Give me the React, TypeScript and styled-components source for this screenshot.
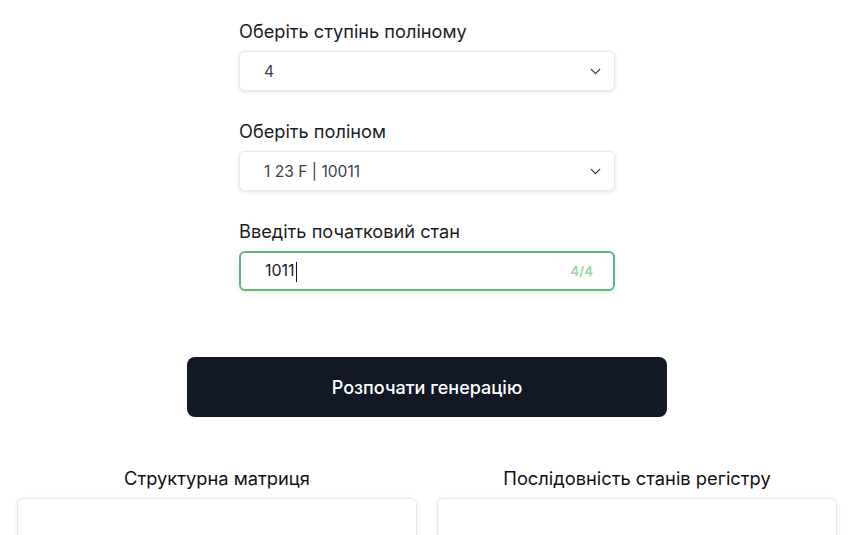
import React from "react";
import styled, { createGlobalStyle } from "styled-components";
import { ChevronDown } from "lucide-react";

const Global = createGlobalStyle`
  html, body { margin: 0; padding: 0; background: #ffffff; }
  body { font-family: Inter, "Noto Sans", sans-serif; color: #1a202c; }
`;

const Page = styled.div`
  width: 820px;
  margin-left: 17px;
  padding-top: 18px;
  display: flex;
  flex-direction: column;
  align-items: center;
`;

const Form = styled.div`
  width: 376px;
  display: flex;
  flex-direction: column;
  gap: 27px;
`;

const Field = styled.div`
  display: flex;
  flex-direction: column;
  gap: 6px;
`;

const Label = styled.div`
  font-size: 18.2px;
  line-height: 27px;
  color: #1a1d23;
`;

const SelectBox = styled.div`
  height: 40px;
  box-sizing: border-box;
  border: 1px solid #e2e8f0;
  border-radius: 6px;
  box-shadow: 0 1px 4px rgba(0, 0, 0, 0.12);
  display: flex;
  align-items: center;
  justify-content: space-between;
  padding: 0 10px 0 24px;
  font-size: 15.6px;
  color: #3a4250;
  background: #fff;
`;

const InputBox = styled.div`
  height: 40px;
  box-sizing: border-box;
  border: 2px solid #5cb87b;
  border-radius: 6px;
  box-shadow: 0 2px 6px rgba(0, 0, 0, 0.1);
  display: flex;
  align-items: center;
  justify-content: space-between;
  padding: 0 20px 0 24px;
  font-size: 16px;
  color: #1a202c;
`;

const Caret = styled.span`
  display: inline-block;
  width: 1px;
  height: 20px;
  background: #111;
  vertical-align: middle;
  margin-left: 1px;
`;

const Counter = styled.span`
  font-size: 13px;
  font-weight: 700;
  color: #9ad8ac;
`;

const Button = styled.button`
  margin-top: 66px;
  width: 480px;
  height: 60px;
  border: none;
  border-radius: 8px;
  background: #121826;
  color: #fff;
  font-family: Inter, "Noto Sans", sans-serif;
  font-size: 18px;
  font-weight: 500;
`;

const Results = styled.div`
  margin-top: 48px;
  width: 100%;
  display: grid;
  grid-template-columns: 400px 400px;
  gap: 20px;
`;

const Column = styled.div`
  display: flex;
  flex-direction: column;
  gap: 6px;
`;

const Heading = styled.div`
  text-align: center;
  font-size: 18.3px;
  line-height: 27px;
  color: #111;
`;

const Panel = styled.div`
  height: 120px;
  border: 1px solid #e2e8f0;
  border-radius: 6px;
  box-shadow: 0 1px 6px rgba(0, 0, 0, 0.08);
  background: #fff;
`;

const Chevron = () => <ChevronDown size={17} strokeWidth={1.8} color="#2d3748" />;

export default function App() {
  return (
    <>
      <Global />
      <Page>
        <Form>
          <Field>
            <Label>Оберіть ступінь поліному</Label>
            <SelectBox>
              <span>4</span>
              <Chevron />
            </SelectBox>
          </Field>
          <Field>
            <Label>Оберіть поліном</Label>
            <SelectBox>
              <span>1 23 F | 10011</span>
              <Chevron />
            </SelectBox>
          </Field>
          <Field>
            <Label>Введіть початковий стан</Label>
            <InputBox>
              <span>
                1011
                <Caret />
              </span>
              <Counter>4/4</Counter>
            </InputBox>
          </Field>
        </Form>
        <Button>Розпочати генерацію</Button>
        <Results>
          <Column>
            <Heading>Структурна матриця</Heading>
            <Panel />
          </Column>
          <Column>
            <Heading>Послідовність станів регістру</Heading>
            <Panel />
          </Column>
        </Results>
      </Page>
    </>
  );
}
